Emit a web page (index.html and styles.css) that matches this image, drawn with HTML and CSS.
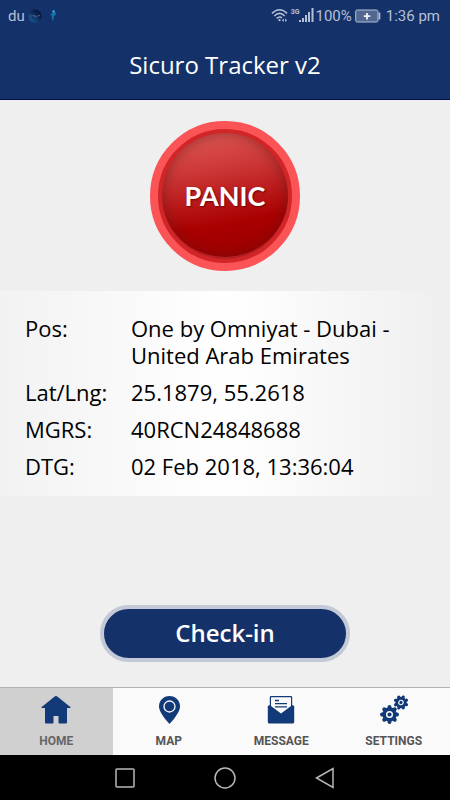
FILE: index.html
```html
<!DOCTYPE html>
<html lang="en">
<head>
    <meta charset="UTF-8">
    <meta name="viewport" content="width=device-width, initial-scale=1">
    <title>Sicuro Tracker v2</title>
    <link rel="stylesheet" href="styles.css">
</head>
<body>
    <header class="header">
        <div class="status-bar">
            <div class="status-left">
                <span>du</span>
                <svg width="14" height="14" viewBox="0 0 14 14" aria-hidden="true">
                    <defs>
                        <linearGradient id="globe" x1="1" y1="0" x2="0" y2="1">
                            <stop offset="0.3" stop-color="#0a1b45"/>
                            <stop offset="1" stop-color="#17669f"/>
                        </linearGradient>
                    </defs>
                    <circle cx="7" cy="7" r="6.7" fill="url(#globe)"/>
                    <path d="M1.500 7h2M4.500 6.500h2v1.500M7.500 6.500v1.500h1.500M10 8V6.500h2" stroke="#52678c" stroke-width="0.8" fill="none"/>
                </svg>
                <svg width="10" height="14" viewBox="0 0 10 14" aria-hidden="true">
                    <path d="M6.500 0v3l1.500 1-.5 2-1.500 1-1 5.500L3.500 8l1-1L2 6l2.500-2z" fill="#1474ad"/>
                    <circle cx="5.500" cy="2.500" r="1.200" fill="#3fa3cf"/>
                </svg>
            </div>
            <div class="status-right">
                <svg width="17" height="15" viewBox="0 0 18 15" fill="none" stroke="#b5c0d6" stroke-width="1.600" aria-hidden="true">
                    <path d="M1 5.200Q9-2.400 17 5.200M3.500 8Q9 2.600 14.500 8M6 10.600Q9 7.800 11.600 10"/>
                    <circle cx="9" cy="12.500" r="1.200" fill="#b5c0d6" stroke="none"/>
                    <path d="M11.500 12.500l2-1.800v3.600zM17 12.500l-2-1.800v3.600z" fill="#b5c0d6" stroke="none"/>
                </svg>
                <span class="network">3G</span>
                <svg class="signal" width="15" height="15" viewBox="0 0 15 15" fill="#b5c0d6" aria-hidden="true">
                    <path d="M0 12h2v2H0zM3 10h2v4H3zM6 7h2v7H6zM9 4h2v10H9zM12.500 0h2v14h-2z"/>
                </svg>
                <span>100%</span>
                <svg class="battery" width="26" height="14" viewBox="0 0 26 14" aria-hidden="true">
                    <rect x="0.700" y="1" width="22.300" height="12" rx="1.500" fill="#52678f" stroke="#b5c0d6"/>
                    <path d="M24.500 3.500v7" stroke="#b5c0d6" stroke-width="1.600"/>
                    <path d="M12 4v6.500M8.800 7.200h6.500" stroke="#f0f3f8" stroke-width="1.800"/>
                </svg>
                <span>1:36 pm</span>
            </div>
        </div>
        <h1 class="title">Sicuro Tracker v2</h1>
    </header>

    <main class="main">
        <button type="button" class="panic">PANIC</button>

        <div class="info">
            <table>
                <tr>
                    <th scope="row">Pos:</th>
                    <td>One by Omniyat - Dubai - United Arab Emirates</td>
                </tr>
                <tr>
                    <th scope="row">Lat/Lng:</th>
                    <td>25.1879, 55.2618</td>
                </tr>
                <tr>
                    <th scope="row">MGRS:</th>
                    <td>40RCN24848688</td>
                </tr>
                <tr>
                    <th scope="row">DTG:</th>
                    <td>02 Feb 2018, 13:36:04</td>
                </tr>
            </table>
        </div>

        <button type="button" class="check-in">Check-in</button>
    </main>

    <nav class="tabs">
        <a href="#home" class="tab active">
            <svg width="30" height="30" viewBox="0 0 30 30" aria-hidden="true">
                <path d="M15 1q.7 0 1.300.6L29.300 12q.8 1-.4 1H26v14.500q0 1-1 1h-6.500q-1 0-1-1V21h-5v6.500q0 1-1 1H5q-1 0-1-1V13H1.100q-1.200 0-.4-1L13.700 1.600Q14.300 1 15 1z"/>
            </svg>
            <span>HOME</span>
        </a>
        <a href="#map" class="tab">
            <svg width="30" height="30" viewBox="0 0 30 30" aria-hidden="true">
                <path d="M15.500 1C9.500 1 5 5.500 5 11.300 5 17 11 24 15.500 29 20 24 26 17 26 11.300 26 5.500 21.500 1 15.500 1z"/>
                <circle cx="15.500" cy="11.500" r="5.500" fill="none" stroke="#fafafa" stroke-width="1.300"/>
            </svg>
            <span>MAP</span>
        </a>
        <a href="#message" class="tab">
            <svg width="30" height="30" viewBox="0 0 30 30" aria-hidden="true">
                <path d="M5 1h20q1.200 0 1.200 1.200V10l2 1v16q0 1.500-1.500 1.500h-23.400q-1.500 0-1.500-1.500V11l2-1V2.200Q3.800 1 5 1z"/>
                <path d="M5 2.300h20V11L15 18.600 5 11z" fill="#fafafa"/>
                <path d="M9 5.500h4M9 8.700h12M9 11.900h12" stroke="#123a78" stroke-width="1.300"/>
            </svg>
            <span>MESSAGE</span>
        </a>
        <a href="#settings" class="tab">
            <svg width="30" height="30" viewBox="0 0 30 30" aria-hidden="true">
                <defs>
                    <g id="gear">
                        <circle r="7.700"/>
                        <g stroke="#123a78" stroke-width="4.200" stroke-linecap="round">
                            <path d="M-8 0h2M6 0h2M0-8v2M0 6v2M-5.600-5.600l1 1M4.600 4.600l1 1M5.600-5.600l-1 1M-4.600 4.600l-1 1"/>
                        </g>
                        <circle r="3" fill="#123a78" stroke="#fafafa" stroke-width="1.500"/>
                    </g>
                </defs>
                <use href="#gear" transform="translate(10.500 19.500) scale(.94)"/>
                <use href="#gear" transform="translate(22 7.500) rotate(22) scale(.74)"/>
            </svg>
            <span>SETTINGS</span>
        </a>
    </nav>

    <div class="system-bar">
        <button type="button" aria-label="Recent apps">
            <svg width="22" height="22" viewBox="0 0 22 22"><rect x="2" y="2" width="18" height="18" rx="1"/></svg>
        </button>
        <button type="button" aria-label="Home">
            <svg width="22" height="22" viewBox="0 0 22 22"><circle cx="11" cy="11" r="10"/></svg>
        </button>
        <button type="button" aria-label="Back">
            <svg width="22" height="22" viewBox="0 0 22 22"><path d="M2.500 11L19 1.500v19z"/></svg>
        </button>
    </div>
</body>
</html>
```
FILE: styles.css
```css
* {
    box-sizing: border-box;
}
body {
    font-family: 'Open Sans', 'Noto Sans', sans-serif;
    margin: 0;
    background-color: #efefef;
    color: #000;
    display: flex;
    flex-direction: column;
    min-height: 100vh;
}
button {
    border: none;
    cursor: pointer;
    font-family: inherit;
    padding: 0;
}
.header {
    background-color: #143269;
    border-bottom: 1px solid #04104a;
    color: white;
}
.status-bar {
    display: flex;
    justify-content: space-between;
    align-items: center;
    height: 31px;
    padding: 0 10px 0 8px;
    font-family: Roboto, sans-serif;
    font-size: 15px;
    color: #b5c0d6;
}
.status-left, .status-right {
    display: flex;
    align-items: center;
}
.status-left {
    gap: 3px;
}
.status-left svg + svg {
    margin-left: 3px;
}
.network {
    font-size: 7px;
    font-weight: bold;
    margin: 0 0 8px 3px;
}
.signal {
    margin-right: 1px;
}
.battery {
    margin: 0 5px 0 3px;
}
.title {
    margin: 0;
    padding: 18px 0 18px;
    font-size: 24px;
    line-height: 32px;
    font-weight: normal;
    text-align: center;
}
.main {
    flex: 1;
    display: flex;
    flex-direction: column;
    align-items: center;
    padding: 21px 0 25px;
}
.panic {
    width: 150px;
    height: 150px;
    border-radius: 50%;
    border: 8px solid #fa5457;
    background: linear-gradient(170deg, #dc5552 8%, #c93232 35%, #a90000 70%, #980000) content-box, #d12527;
    padding: 4px 4px 6px;
    color: white;
    font-family: Lato, sans-serif;
    font-size: 27px;
    font-weight: bold;
    text-shadow: 1px 1px 2px #700000;
    position: relative;
}
/* darker rim of the dome */
.panic::after {
    content: "";
    position: absolute;
    inset: 4px;
    border-radius: 50%;
    box-shadow: inset 0 0 14px rgba(100, 20, 20, 0.6);
}
.info {
    width: 100%;
    margin-top: 20px;
    padding: 19px 25px 11px;
    background: linear-gradient(to right, #f2f2f2, #fff 50%, #efefef 98%);
}
table {
    border-collapse: collapse;
    width: 100%;
    font-size: 22px;
    line-height: 27px;
}
th, td {
    padding: 5px 0;
    text-align: left;
    vertical-align: top;
    font-weight: normal;
}
th {
    width: 106px;
}
.check-in {
    width: 250px;
    height: 57px;
    margin-top: auto;
    padding-bottom: 3px;
    border: 4px solid #c3c9d6;
    border-radius: 29px;
    background-color: #143269;
    color: white;
    font-size: 24px;
    font-weight: 600;
}
.tabs {
    display: flex;
    background-color: #fafafa;
    border-top: 1px solid #b2b2b2;
}
.tab {
    flex: 1;
    display: flex;
    flex-direction: column;
    align-items: center;
    gap: 9px;
    padding: 7px 0 6px;
    color: #555;
    fill: #123a78;
    font-family: Roboto, sans-serif;
    font-size: 12px;
    line-height: 15px;
    font-weight: bold;
    text-decoration: none;
}
.tab.active {
    background-color: #d0d0d0;
    color: #666;
}
.system-bar {
    display: flex;
    justify-content: center;
    gap: 78px;
    height: 45px;
    background-color: #000;
}
.system-bar button {
    display: flex;
    align-items: center;
    background: none;
}
.system-bar svg {
    fill: none;
    stroke: #b8b8b8;
    stroke-width: 1.5;
}
```
